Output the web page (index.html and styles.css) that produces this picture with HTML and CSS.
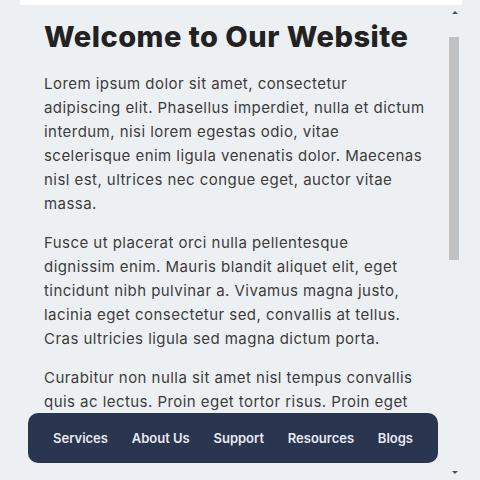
FILE: index.html
```html
<!DOCTYPE html>
<html>
<head>
	<title>Welcome</title>
	<meta charset="utf-8">
	<link rel="stylesheet" href="styles.css">
</head>
<body>
	<div class="window">
		<div class="window__top"></div>
		<div class="window__body">
			<div class="page">
				<h1 class="page__title">Welcome to Our Website</h1>
				<p class="page__text">Lorem ipsum dolor sit amet, consectetur<br>
					adipiscing elit. Phasellus imperdiet, nulla et dictum<br>
					interdum, nisi lorem egestas odio, vitae<br>
					scelerisque enim ligula venenatis dolor. Maecenas<br>
					nisl est, ultrices nec congue eget, auctor vitae<br>
					massa.</p>
				<p class="page__text">Fusce ut placerat orci nulla pellentesque<br>
					dignissim enim. Mauris blandit aliquet elit, eget<br>
					tincidunt nibh pulvinar a. Vivamus magna justo,<br>
					lacinia eget consectetur sed, convallis at tellus.<br>
					Cras ultricies ligula sed magna dictum porta.</p>
				<p class="page__text">Curabitur non nulla sit amet nisl tempus convallis<br>
					quis ac lectus. Proin eget tortor risus. Proin eget</p>
			</div>
			<div class="scroll">
				<span class="scroll__arrow scroll__arrow_up"></span>
				<div class="scroll__track"><div class="scroll__thumb"></div></div>
				<span class="scroll__arrow scroll__arrow_down"></span>
			</div>
		</div>
		<nav class="menu">
			<a class="menu__link" href="#">Services</a>
			<a class="menu__link" href="#">About Us</a>
			<a class="menu__link" href="#">Support</a>
			<a class="menu__link" href="#">Resources</a>
			<a class="menu__link" href="#">Blogs</a>
		</nav>
	</div>
</body>
</html>
```

FILE: styles.css
```css
* {
	box-sizing: border-box;
}
body {
	margin: 0;
	background: #edf0f3;
	font-family: Inter, "Open Sans", sans-serif;
}
.window {
	position: relative;
	width: 442px;
	height: 480px;
	margin-left: 20px;
	overflow: hidden;
}
.window__top {
	height: 5px;
	background: #fff;
}
.window__body {
	display: flex;
	height: 475px;
}
.page {
	flex: 1;
	padding: 14px 8px 0 24px;
	overflow: hidden;
}
.page__title {
	margin: 0 0 17px;
	font-size: 29px;
	line-height: 36px;
	font-weight: 800;
	color: #222;
	letter-spacing: 0.5px;
}
.page__text {
	margin: 0 0 15px;
	font-size: 15px;
	line-height: 24px;
	color: #3c3c3c;
	letter-spacing: 0.45px;
	white-space: nowrap;
}

.scroll {
	width: 15px;
	display: flex;
	flex-direction: column;
	align-items: center;
}
.scroll__arrow {
	width: 0;
	height: 0;
	border-left: 3px solid transparent;
	border-right: 3px solid transparent;
}
.scroll__arrow_up {
	margin-top: 6px;
	border-bottom: 3px solid #505050;
}
.scroll__arrow_down {
	margin-bottom: 6px;
	border-top: 3px solid #505050;
}
.scroll__track {
	flex: 1;
	width: 100%;
	padding: 23px 3px 0 2px;
}
.scroll__thumb {
	height: 223px;
	background: #c1c1c1;
}

.menu {
	position: absolute;
	left: 8px;
	top: 413px;
	width: 410px;
	height: 50px;
	display: flex;
	align-items: center;
	justify-content: space-between;
	padding: 0 25px;
	background: #2a3550;
	border-radius: 10px;
}
.menu__link {
	color: #e8eaf0;
	text-decoration: none;
	font-size: 13px;
	font-weight: 600;
}
```
